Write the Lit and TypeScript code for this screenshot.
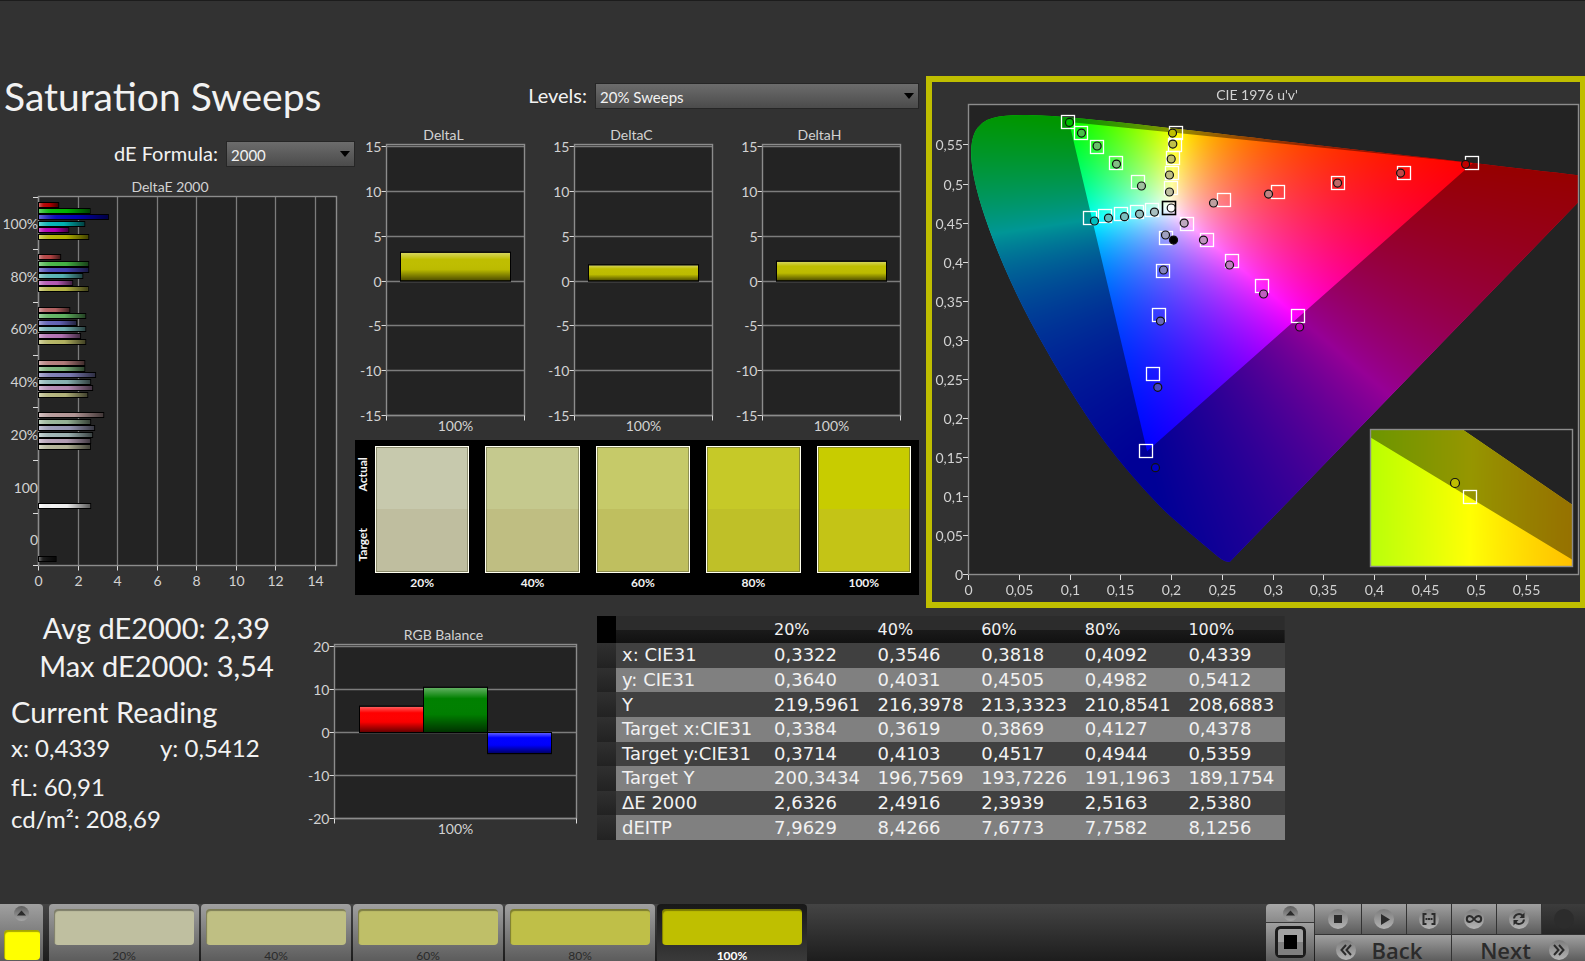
import { LitElement, html, svg, css } from "lit";
import { customElement, property } from "lit/decorators.js";
import { classMap } from "lit/directives/class-map.js";

type Point = [number, number];

const LEVELS = ["20%", "40%", "60%", "80%", "100%"];
/* Value of the unlit channels at each saturation level. */
const OFF = [160, 131, 104, 72, 0];
const OFF_SOFT = [168, 146, 122, 94, 0];
/* Red, green, blue, cyan, magenta, yellow as lit channels. */
const HUES = [
  [1, 0, 0],
  [0, 1, 0],
  [0, 0, 1],
  [0, 1, 1],
  [1, 0, 1],
  [1, 1, 0],
];

const tint = (hue: number, level: number) => {
  const off = hue === 3 || hue === 4 ? OFF_SOFT : OFF;
  return `rgb(${HUES[hue].map((on) => (on ? 191 : off[level])).join(",")})`;
};

const chartStyles = css`
  :host {
    display: block;
  }
  svg {
    display: block;
    width: 100%;
    height: auto;
  }
  text {
    font-family: Lato, "Open Sans", sans-serif;
    font-size: 14px;
    fill: #d2d2d2;
    dominant-baseline: central;
  }
  .mid {
    text-anchor: middle;
  }
  .end {
    text-anchor: end;
  }
  .plot {
    fill: #232323;
  }
  .frame {
    fill: none;
    stroke: #8c8c8c;
    stroke-width: 1.4;
  }
  .grid {
    stroke: #7c7c7c;
    stroke-width: 1.3;
  }
  .tick {
    stroke: #dcdcdc;
  }
  .bar {
    stroke: #000;
  }
`;

interface Bar {
  value: number;
  color: string;
}

/* Vertical bars round a zero line, with a scale at the left. */
@customElement("column-chart")
export class ColumnChart extends LitElement {
  @property() heading = "";
  @property({ type: Number }) limit = 15;
  @property({ type: Number }) step = 5;
  @property({ type: Number }) width = 188;
  @property({ type: Number }) height = 310;
  @property({ attribute: false }) bars: Bar[] = [];

  static styles = chartStyles;

  render() {
    const wide = this.width > 200;
    const left = wide ? 30.5 : 31.5;
    const right = this.width - (wide ? 15.5 : 18.5);
    const top = 19.5;
    const bottom = this.height - (wide ? 21.5 : 19.5);
    const unit = (bottom - top - 2) / (2 * this.limit);
    const y = (v: number) => bottom - (v + this.limit) * unit;
    const snap = (v: number) => Math.floor(y(v)) + 0.5;
    const values: number[] = [];
    for (let v = this.limit; v >= -this.limit; v -= this.step) values.push(v);
    const inset = wide ? 25 : 14;
    const slot = Math.floor((right - left - 2 * inset) / this.bars.length);
    return html`<svg viewBox="0 0 ${this.width} ${this.height}" role="img" aria-label=${this.heading}>
      <defs>
        <linearGradient id="gloss" x1="0" y1="0" x2="0" y2="1">
          <stop offset="0" stop-color="#fff" stop-opacity=".4" />
          <stop offset=".25" stop-color="#fff" stop-opacity="0" />
          <stop offset=".6" stop-color="#000" stop-opacity="0.02" />
          <stop offset="1" stop-color="#000" stop-opacity=".62" />
        </linearGradient>
      </defs>
      <text class="mid" x=${(left + right) / 2 - 12} y="9">${this.heading}</text>
      <rect class="plot" x=${left} y=${top} width=${right - left} height=${bottom - top} />
      ${values.map(
        (v) => svg`
          <line class="grid" x1=${left} x2=${right} y1=${snap(v)} y2=${snap(v)} />
          <line class="tick" x1=${left - 5} x2=${left} y1=${snap(v)} y2=${snap(v)} />
          <text class="end" x=${left - 5} y=${snap(v)}>${v}</text>`,
      )}
      <rect class="frame" x=${left} y=${top} width=${right - left} height=${bottom - top} />
      <line class="tick" x1=${left} x2=${left} y1=${bottom} y2=${bottom + 5} />
      <line class="tick" x1=${right} x2=${right} y1=${bottom} y2=${bottom + 5} />
      ${this.bars.map((bar, i) => {
        const from = Math.min(y(bar.value), y(0));
        const size = Math.abs(y(bar.value) - y(0));
        const x = left + inset + i * slot;
        return svg`
          <rect class="bar" x=${x} y=${from} width=${slot} height=${size} fill=${bar.color} />
          <rect x=${x} y=${from} width=${slot} height=${size} fill="url(#gloss)" />
          <rect class="bar" x=${x} y=${from} width=${slot} height=${size} fill="none" />`;
      })}
      <text class="mid" x=${(left + right) / 2} y=${bottom + 10}>100%</text>
    </svg>`;
  }
}

/* Horizontal bars of the error of each colour at each saturation level. */
@customElement("sweep-chart")
export class SweepChart extends LitElement {
  static styles = chartStyles;

  private groups = [
    { label: "100%", values: [1.02, 2.61, 3.54, 2.34, 1.53, 2.54] },
    { label: "80%", values: [1.12, 2.54, 2.54, 2.24, 1.73, 2.52] },
    { label: "60%", values: [1.58, 2.39, 1.93, 2.39, 2.13, 2.39] },
    { label: "40%", values: [2.34, 2.34, 2.89, 2.64, 2.74, 2.49] },
    { label: "20%", values: [3.3, 2.64, 2.84, 2.74, 2.64, 2.63] },
    { label: "100", values: [], gray: 2.64, fill: "#fff" },
    { label: "0", values: [], gray: 0.89, fill: "#141414" },
  ];

  private bar(slot: number, value: number, top: number, fill: string) {
    const y = Math.round(top + 5 + 6.4 * slot);
    const width = value * 19.75;
    return svg`
      <rect class="bar" x="38.5" y=${y + 0.5} width=${width} height="5" fill=${fill} />
      <rect x="39" y=${y + 1} width=${width - 1} height="4" fill="url(#sheen)" />`;
  }

  render() {
    const top = 19.5;
    const bottom = 388.5;
    const pitch = (bottom - top) / 7;
    return html`<svg viewBox="0 0 355 420" role="img" aria-label="DeltaE 2000">
      <defs>
        <linearGradient id="sheen">
          <stop offset="0" stop-color="#fff" stop-opacity=".4" />
          <stop offset=".25" stop-color="#777" stop-opacity=".1" />
          <stop offset=".55" stop-color="#000" stop-opacity="0.08" />
          <stop offset="1" stop-color="#000" stop-opacity=".65" />
        </linearGradient>
      </defs>
      <text class="mid" x="170" y="9">DeltaE 2000</text>
      <rect class="plot" x="38.5" y=${top} width="298" height=${bottom - top} />
      ${[0, 2, 4, 6, 8, 10, 12, 14].map((v) => {
        const x = Math.round(38 + v * 19.75) + 0.5;
        return svg`
          <line class="grid" x1=${x} x2=${x} y1=${top} y2=${bottom} />
          <line class="tick" x1=${x} x2=${x} y1=${bottom} y2=${bottom + 5} />
          <text class="mid" x=${x} y=${bottom + 15}>${v}</text>`;
      })}
      <rect class="frame" x="38.5" y=${top} width="298" height=${bottom - top} />
      ${this.groups.map((g, i) => {
        const start = top + i * pitch;
        const line = Math.round(start) + 0.5;
        return svg`
          <line class="tick" x1="33" x2="38" y1=${line} y2=${line} />
          <text class="end" x="38" y=${start + 27}>${g.label}</text>
          ${g.values.map((v, j) => this.bar(j, v, start, tint(j, 4 - i)))}
          ${g.gray ? this.bar(6, g.gray, start, g.fill!) : null}`;
      })}
      <line class="tick" x1="33" x2="38" y1=${bottom} y2=${bottom} />
    </svg>`;
  }
}

/* Spectral locus, CIE 1931 x and y. */
const LOCUS: Point[] = [
  [0.1741, 0.005], [0.1714, 0.0051], [0.1689, 0.0069], [0.1644, 0.0109],
  [0.1566, 0.0177], [0.144, 0.0297], [0.1241, 0.0578], [0.1096, 0.0868],
  [0.0913, 0.1327], [0.0687, 0.2007], [0.0454, 0.295], [0.0235, 0.4127],
  [0.0082, 0.5384], [0.0039, 0.6548], [0.0139, 0.7502], [0.0389, 0.812],
  [0.0743, 0.8338], [0.1142, 0.8262], [0.1547, 0.8059], [0.1929, 0.7816],
  [0.2296, 0.7543], [0.3016, 0.6923], [0.3731, 0.6245], [0.4441, 0.5547],
  [0.5125, 0.4866], [0.5752, 0.4242], [0.627, 0.3725], [0.6658, 0.334],
  [0.6915, 0.3083], [0.719, 0.2809], [0.7347, 0.2653],
];
const WHITE: Point = [0.3127, 0.329];
const CORNERS: Point[] = [
  [0.68, 0.32],
  [0.265, 0.69],
  [0.15, 0.06],
  [0.199, 0.3354],
  [0.3374, 0.1525],
  [0.4378, 0.5359],
];
/* Measured u' and v', 20% to 100%, in the order of HUES. */
const MEASURED: Point[][] = [
  [[0.2414, 0.4745], [0.2956, 0.4859], [0.3636, 0.4999], [0.4257, 0.5127], [0.4898, 0.5238]],
  [[0.1704, 0.4962], [0.1458, 0.5242], [0.1267, 0.5472], [0.1113, 0.5637], [0.0995, 0.5773]],
  [[0.1941, 0.4337], [0.1921, 0.389], [0.1891, 0.3239], [0.1865, 0.2394], [0.1842, 0.1369]],
  [[0.1832, 0.4629], [0.1685, 0.4604], [0.1537, 0.4571], [0.1379, 0.4553], [0.1241, 0.4515]],
  [[0.2125, 0.4489], [0.2315, 0.4272], [0.2572, 0.3954], [0.2907, 0.3584], [0.3262, 0.3163]],
  [[0.198, 0.4885], [0.198, 0.5102], [0.1997, 0.5306], [0.2013, 0.5497], [0.201, 0.5637]],
];

const toUv = ([x, y]: Point): Point => {
  const d = -2 * x + 12 * y + 3;
  return [(4 * x) / d, (9 * y) / d];
};

/* Linear display colour of the given chromaticity, with its peak channel full. */
const toRgb = (u: number, v: number) => {
  const X = (9 * u) / (4 * v);
  const Z = (12 - 3 * u - 20 * v) / (4 * v);
  const lin = [
    2.4934969 * X - 0.9313836 - 0.4027108 * Z,
    -0.829489 * X + 1.7626641 + 0.0236247 * Z,
    0.0358458 * X - 0.0761724 + 0.9568845 * Z,
  ].map((c) => Math.max(0, c));
  const peak = Math.max(...lin);
  return lin.map((c) => (255 * c) / peak);
};

interface View {
  x: number;
  y: number;
  w: number;
  h: number;
  u0: number;
  v0: number;
  su: number;
  sv: number;
  /* Share of the hue range that the view covers. */
  span: number;
}

const FULL: View = { x: 37, y: 23, w: 609, h: 470, u0: 0, v0: 0, su: 1015, sv: 784, span: 1 };
const DETAIL: View = {
  x: 439, y: 348, w: 201, h: 137,
  u0: 0.2047 - 100 / 2600, v0: 0.5638 - 69 / 12000, su: 2600, sv: 12000, span: 0.6,
};

const place = (view: View, [u, v]: Point): Point => [
  view.x + (u - view.u0) * view.su,
  view.y + view.h - (v - view.v0) * view.sv,
];

@customElement("gamut-chart")
export class GamutChart extends LitElement {
  static styles = [
    chartStyles,
    css`
      .stack {
        display: grid;
      }
      .stack > * {
        grid-area: 1 / 1;
        width: 100%;
        height: auto;
      }
      .target {
        fill: none;
        stroke: #fff;
        stroke-width: 1.3;
      }
      .target.white {
        stroke: #000;
        stroke-width: 1.6;
      }
      .reading {
        stroke: #111;
        stroke-width: 1.2;
      }
    `,
  ];

  firstUpdated() {
    const canvas = this.renderRoot.querySelector("canvas")!;
    const ctx = canvas.getContext("2d")!;
    this.paint(ctx, FULL);
    this.paint(ctx, DETAIL);
  }

  private paint(ctx: CanvasRenderingContext2D, view: View) {
    const layer = document.createElement("canvas");
    layer.width = view.w;
    layer.height = view.h;
    const layerCtx = layer.getContext("2d")!;
    const image = layerCtx.createImageData(view.w, view.h);
    const uMid = view.u0 + view.w / 2 / view.su;
    const vMid = view.v0 + view.h / 2 / view.sv;
    for (let j = 0; j < view.h; j++) {
      for (let i = 0; i < view.w; i++) {
        const u = view.u0 + (i + 0.5) / view.su;
        const v = view.v0 + (view.h - j - 0.5) / view.sv;
        const [r, g, b] = toRgb(uMid + (u - uMid) * view.span, vMid + (v - vMid) * view.span);
        image.data.set([r, g, b, 255], (j * view.w + i) * 4);
      }
    }
    layerCtx.putImageData(image, 0, 0);

    const edge = LOCUS.map((p) => place(view, toUv(p)));
    const locus = new Path2D();
    locus.moveTo(...edge[0]);
    for (let i = 1; i < edge.length - 1; i++) {
      const [x, y] = edge[i];
      const [nx, ny] = edge[i + 1];
      locus.quadraticCurveTo(x, y, (x + nx) / 2, (y + ny) / 2);
    }
    locus.lineTo(...edge[edge.length - 1]);
    locus.closePath();

    const shade = new Path2D(locus);
    CORNERS.slice(0, 3).forEach((p, i) => {
      const [x, y] = place(view, toUv(p));
      if (i) shade.lineTo(x, y);
      else shade.moveTo(x, y);
    });
    shade.closePath();

    ctx.save();
    ctx.beginPath();
    ctx.rect(view.x, view.y, view.w, view.h);
    ctx.clip();
    ctx.fillStyle = "#232323";
    ctx.fillRect(view.x, view.y, view.w, view.h);
    ctx.clip(locus);
    ctx.drawImage(layer, view.x, view.y);
    ctx.fillStyle = "rgba(0,0,0,.41)";
    ctx.fill(shade, "evenodd");
    ctx.restore();
  }

  private target(point: Point, cls = "target") {
    const [x, y] = place(FULL, point);
    return svg`<rect class=${cls} x=${Math.round(x) - 7.5} y=${Math.round(y) - 6.5} width="13" height="13" />`;
  }

  private reading(point: Point, fill: string) {
    const [x, y] = place(FULL, point);
    return svg`<circle class="reading" cx=${x - 0.5} cy=${y} r="4" fill=${fill} />`;
  }

  render() {
    const ticks = Array.from({ length: 12 }, (_, i) => i * 0.05);
    const label = (v: number) => String(Number(v.toFixed(2))).replace(".", ",");
    return html`<div class="stack">
      <canvas width="648" height="520"></canvas>
      <svg viewBox="0 0 648 520" role="img" aria-label="CIE 1976 u'v'">
        <text class="mid" x="325" y="12">CIE 1976 u'v'</text>
        <rect class="frame" x="36.5" y="22.5" width="610" height="470" />
        ${ticks.map((t) => {
          const x = Math.round(36 + t * 1015) + 0.5;
          const y = Math.round(492 - t * 781) + 0.5;
          return svg`
            <line class="tick" x1=${x} x2=${x} y1="493" y2="498" />
            <text class="mid" x=${x} y="507">${label(t)}</text>
            <line class="tick" x1="31" x2="36" y1=${y} y2=${y} />
            <text class="end" x="31" y=${y}>${label(t)}</text>`;
        })}
        ${CORNERS.map((corner) =>
          [1, 0.8, 0.593, 0.393, 0.205].map((s) =>
            this.target(
              toUv([
                WHITE[0] + s * (corner[0] - WHITE[0]),
                WHITE[1] + s * (corner[1] - WHITE[1]),
              ]),
            ),
          ),
        )}
        ${this.target(toUv(WHITE), "target white")}
        ${MEASURED.map((row, hue) => row.map((p, level) => this.reading(p, tint(hue, level))))}
        ${this.reading([0.1997, 0.4681], "#fff")} ${this.reading([0.202, 0.4272], "#000")}
        <rect class="frame" x="438.5" y="347.5" width="202" height="137" />
        <circle class="reading" cx="523" cy="401" r="4.5" fill="#bfbe00" />
        <rect class="target" x="531.5" y="408.5" width="13" height="13" />
      </svg>
    </div>`;
  }
}

@customElement("app-root")
export class AppRoot extends LitElement {
  static styles = css`
    :host {
      display: flex;
      flex-direction: column;
      min-height: 100vh;
      box-sizing: border-box;
      border-top: 1px solid #1c1c1c;
      background: #323232;
      color: #f2f2f2;
      font-family: Lato, "Open Sans", sans-serif;
      overflow: hidden;
    }
    main {
      flex: 1;
      padding-top: 75px;
    }
    .top {
      display: grid;
      grid-template-columns: 355fr 571fr 659fr;
    }
    h1,
    h2,
    p {
      margin: 0;
      font-weight: 400;
    }
    h1 {
      padding-left: 4px;
      font-size: 39px;
      line-height: 40px;
    }
    .field {
      display: flex;
      justify-content: flex-end;
      align-items: center;
      gap: 8px;
      font-size: 20px;
      line-height: 24px;
    }
    .field label {
      padding-bottom: 2px;
    }
    .formula {
      padding: 25px 0 10px;
    }
    .levels {
      padding: 7px 0 16px;
    }
    .drop {
      display: grid;
      align-items: center;
    }
    .drop > * {
      grid-area: 1 / 1;
    }
    .formula .drop {
      width: 129px;
    }
    .levels .drop {
      width: 324px;
    }
    .drop svg {
      justify-self: end;
      width: 10px;
      height: 6px;
      margin-right: 5px;
      pointer-events: none;
    }
    select {
      appearance: none;
      width: 100%;
      height: 26px;
      padding: 1px 4px 0;
      border: 1px solid #262626;
      border-radius: 0;
      background: linear-gradient(#6c6c6c, #4b4b4b);
      color: #f2f2f2;
      font: 15px Lato, "Open Sans", sans-serif;
    }
    .middle {
      padding-right: 7px;
    }
    .deltas {
      display: grid;
      grid-template-columns: repeat(3, 1fr);
    }
    .compare {
      display: grid;
      grid-template-columns: 20px 1fr;
      margin-top: 5px;
      padding: 6px 8px 4px 0;
      background: #000;
      font-size: 12px;
      font-weight: 700;
      line-height: 16px;
    }
    .sides {
      display: flex;
      flex-direction: column;
      gap: 14px;
      height: 127px;
    }
    .sides span {
      flex: 1;
      writing-mode: vertical-rl;
      transform: rotate(180deg);
      text-align: center;
    }
    .patches {
      display: grid;
      grid-template-columns: repeat(5, 1fr);
      gap: 16px;
      text-align: center;
    }
    .patch {
      box-sizing: border-box;
      height: 127px;
      margin-bottom: 2px;
      border: 1px solid #fffff0;
      box-shadow: inset 0 0 0 1px rgba(90, 90, 60, 0.5);
    }
    .gamut {
      border: 6px solid #bfbe00;
      border-right-width: 5px;
    }
    .bottom {
      display: grid;
      grid-template-columns: 304fr 288fr 993fr;
      align-items: start;
    }
    .readings {
      padding: 1px 0 0 11px;
      min-width: 0;
      font-size: 24px;
      line-height: 32px;
      white-space: nowrap;
    }
    .readings h2,
    .stat {
      font-size: 29px;
      line-height: 38px;
    }
    .stat {
      padding-right: 2px;
      text-align: center;
    }
    .readings h2 {
      padding: 8px 0 1px;
    }
    .pair {
      display: grid;
      grid-template-columns: 149px 1fr;
      padding-bottom: 7px;
    }
    .balance {
      padding-top: 17px;
    }
    .data {
      padding: 8px 0 0 5px;
    }
    table {
      width: 688px;
      height: 224px;
      border-collapse: collapse;
      table-layout: fixed;
      font: 18px "DejaVu Sans", sans-serif;
      white-space: nowrap;
    }
    .gutter {
      width: 19px;
    }
    .names {
      width: 151px;
    }
    th,
    td {
      padding: 0 0 0 6px;
      font-weight: 400;
      text-align: left;
      line-height: 22px;
    }
    td {
      padding-left: 7px;
    }
    thead th {
      padding-left: 7px;
      font-size: 16px;
    }
    thead tr {
      height: 27px;
      background: linear-gradient(#2c2c2c 50%, #1a1a1a 52%, #111);
    }
    thead .handle {
      background: #000;
    }
    tbody tr {
      background: #404040;
    }
    tbody tr:nth-child(even) {
      background: #808080;
    }
    tbody .handle {
      background: linear-gradient(#303030, #222);
    }
    footer {
      display: flex;
      height: 57px;
      background: linear-gradient(#444, #1d1d1d);
    }
    button {
      display: flex;
      align-items: center;
      justify-content: center;
      padding: 0;
      border: 0;
      background: none;
      color: #2b2b2b;
      font: 12px Lato, "Open Sans", sans-serif;
    }
    .metal {
      background: linear-gradient(#a0a0a0, #5c5c5c);
    }
    .current {
      display: flex;
      flex-direction: column;
      align-items: center;
      width: 43px;
      margin-right: 6px;
      border-radius: 0 4px 0 0;
    }
    .current button {
      width: 43px;
      height: 26px;
      padding-bottom: 8px;
    }
    .now {
      width: 36px;
      height: 30px;
      border-radius: 4px;
      background: #ff0;
      box-shadow: inset 1px 2px 1px rgba(0, 0, 0, 0.35);
    }
    .tabs {
      display: flex;
      gap: 2px;
      flex: 1;
    }
    .tab {
      flex-direction: column;
      justify-content: flex-start;
      width: 150px;
      padding-top: 5px;
      border-radius: 4px 4px 0 0;
      line-height: 14px;
      overflow: hidden;
    }
    .tab.on {
      background: linear-gradient(#181818, #3a3a3a);
      color: #fff;
      font-weight: 700;
    }
    .chip {
      flex: none;
      width: 140px;
      height: 36px;
      margin-bottom: 4px;
      border-radius: 4px;
      box-shadow: inset 1px 2px 1px rgba(0, 0, 0, 0.35);
    }
    .side {
      display: grid;
      grid-template-rows: 18px 38px;
      gap: 1px;
      width: 48px;
      margin-right: 1px;
    }
    .side .metal:first-child {
      border-radius: 4px 4px 0 0;
      background: linear-gradient(#a8a8a8, #8a8a8a);
    }
    .controls {
      display: grid;
      grid-template-columns: 46px 44px 44px 44px 44px 43px;
      grid-template-rows: 30px 26px;
      gap: 1px;
      width: 270px;
      background: #333;
    }
    .controls .idle {
      background: linear-gradient(#3c3c3c, #262626);
    }
    .nav {
      grid-column: span 3;
      gap: 16px;
      padding: 4px 8px 0 0;
      font: 600 22px/24px "Open Sans", sans-serif;
      overflow: hidden;
    }
    .nav.wide {
      gap: 18px;
      padding: 4px 0 0 12px;
    }
    svg {
      display: block;
    }
    .disc.dark {
      fill: #2c2c2c;
    }
    .ink {
      fill: #2b2b2b;
    }
    .stroke {
      fill: none;
      stroke: #2b2b2b;
      stroke-width: 2;
    }
  `;

  private rows: string[][] = [
    ["x: CIE31", "0,3322", "0,3546", "0,3818", "0,4092", "0,4339"],
    ["y: CIE31", "0,3640", "0,4031", "0,4505", "0,4982", "0,5412"],
    ["Y", "219,5961", "216,3978", "213,3323", "210,8541", "208,6883"],
    ["Target x:CIE31", "0,3384", "0,3619", "0,3869", "0,4127", "0,4378"],
    ["Target y:CIE31", "0,3714", "0,4103", "0,4517", "0,4944", "0,5359"],
    ["Target Y", "200,3434", "196,7569", "193,7226", "191,1963", "189,1754"],
    ["ΔE 2000", "2,6326", "2,4916", "2,3939", "2,5163", "2,5380"],
    ["dEITP", "7,9629", "8,4266", "7,6773", "7,7582", "8,1256"],
  ];

  private patches = [
    ["#c7c9ad", "#bfbe9f"],
    ["#c5c98e", "#bfbe82"],
    ["#c6ca69", "#bfbf5f"],
    ["#c6c928", "#bfc028"],
    ["#c8cc00", "#c4c416"],
  ];

  private arrow() {
    return html`<svg viewBox="0 0 10 6" aria-hidden="true"><path d="M0 0h10L5 6z" fill="#000" /></svg>`;
  }

  private disc(shape: unknown, dark = false) {
    return html`<svg width="20" height="20" viewBox="0 0 20 20" aria-hidden="true">
      <defs>
        <linearGradient id="dish" x1="0" y1="0" x2="0" y2="1">
          <stop offset="0" stop-color="#7c7c7c" />
          <stop offset="1" stop-color="#b4b4b4" />
        </linearGradient>
      </defs>
      ${dark
        ? svg`<circle class="disc dark" cx="10" cy="10" r="10" />`
        : svg`<circle cx="10" cy="10" r="10" fill="url(#dish)" />`}
      ${shape}
    </svg>`;
  }

  private upDisc() {
    return html`<svg width="15" height="15" viewBox="0 0 15 15" aria-hidden="true">
      <defs>
        <linearGradient id="up" x1="0" y1="0" x2="0" y2="1">
          <stop offset="0" stop-color="#5e5e5e" />
          <stop offset="1" stop-color="#a6a6a6" />
        </linearGradient>
      </defs>
      <circle cx="7.5" cy="7.5" r="7.5" fill="url(#up)" />
      <path class="ink" d="M7.5 4.5l4.5 5h-9z" />
    </svg>`;
  }

  render() {
    const yellow = "#bfbe00";
    return html`
      <main>
        <div class="top">
          <section>
            <h1>Saturation Sweeps</h1>
            <div class="field formula">
              <label for="formula">dE Formula:</label>
              <div class="drop">
                <select id="formula"><option>2000</option></select>
                ${this.arrow()}
              </div>
            </div>
            <sweep-chart></sweep-chart>
          </section>
          <section class="middle">
            <div class="field levels">
              <label for="levels">Levels:</label>
              <div class="drop">
                <select id="levels"><option>20% Sweeps</option></select>
                ${this.arrow()}
              </div>
            </div>
            <div class="deltas">
              <column-chart heading="DeltaL" .bars=${[{ value: 3.2, color: yellow }]}></column-chart>
              <column-chart heading="DeltaC" .bars=${[{ value: 1.8, color: yellow }]}></column-chart>
              <column-chart heading="DeltaH" .bars=${[{ value: 2.2, color: yellow }]}></column-chart>
            </div>
            <div class="compare">
              <div class="sides"><span>Actual</span><span>Target</span></div>
              <div class="patches">
                ${this.patches.map(
                  ([actual, target], i) => html`<div>
                    <div class="patch" style="background:linear-gradient(${actual} 50%,${target} 50%)"></div>
                    ${LEVELS[i]}
                  </div>`,
                )}
              </div>
            </div>
          </section>
          <section class="gamut"><gamut-chart></gamut-chart></section>
        </div>
        <div class="bottom">
          <section class="readings">
            <p class="stat">Avg dE2000: 2,39</p>
            <p class="stat">Max dE2000: 3,54</p>
            <h2>Current Reading</h2>
            <div class="pair"><span>x: 0,4339</span><span>y: 0,5412</span></div>
            <p>fL: 60,91</p>
            <p>cd/m²: 208,69</p>
          </section>
          <section class="balance">
            <column-chart
              heading="RGB Balance"
              .limit=${20}
              .step=${10}
              .width=${288}
              .height=${215}
              .bars=${[
                { value: 6.1, color: "#f00" },
                { value: 10.5, color: "#008000" },
                { value: -4.9, color: "#00f" },
              ]}
            ></column-chart>
          </section>
          <section class="data">
            <table>
              <colgroup>
                <col class="gutter" />
                <col class="names" />
                <col span="5" />
              </colgroup>
              <thead>
                <tr>
                  <td class="handle"></td>
                  <td></td>
                  ${LEVELS.map((l) => html`<th scope="col">${l}</th>`)}
                </tr>
              </thead>
              <tbody>
                ${this.rows.map(
                  ([name, ...cells]) => html`<tr>
                    <td class="handle"></td>
                    <th scope="row">${name}</th>
                    ${cells.map((c) => html`<td>${c}</td>`)}
                  </tr>`,
                )}
              </tbody>
            </table>
          </section>
        </div>
      </main>
      <footer>
        <div class="current metal">
          <button aria-label="Expand patch">${this.upDisc()}</button>
          <div class="now"></div>
        </div>
        <div class="tabs">
          ${LEVELS.map(
            (l, i) => html`<button class=${classMap({ tab: true, metal: i < 4, on: i === 4 })}>
              <span class="chip" style="background-color:${tint(5, i)}"></span>${l}
            </button>`,
          )}
        </div>
        <div class="side">
          <button class="metal" aria-label="Expand window">${this.upDisc()}</button>
          <button class="metal" aria-label="Window pattern">
            <svg width="31" height="32" viewBox="0 0 31 32" aria-hidden="true">
              <rect x="1.5" y="1.5" width="28" height="29" rx="4" fill="#a2a2a2" stroke="#1c1c1c" stroke-width="3" />
              <path d="M3 16h25v13H3z" fill="#808080" />
              <rect x="9" y="9" width="13" height="14" fill="#000" />
            </svg>
          </button>
        </div>
        <div class="controls">
          <button class="metal" aria-label="Stop">${this.disc(svg`<path class="ink" d="M6 6h8v8H6z" />`)}</button>
          <button class="metal" aria-label="Play">${this.disc(svg`<path class="ink" d="M7 5l9 5.500-9 5.500z" />`)}</button>
          <button class="metal" aria-label="Read series">
            ${this.disc(svg`
              <path class="stroke" d="M7.500 5h-3v10h3M12.500 5h3v10h-3" />
              <path class="ink" d="M6.500 9h2v2h-2zM9 9h2v2H9zM11.500 9h2v2h-2z" />`)}
          </button>
          <button class="metal" aria-label="Read continuously">
            ${this.disc(svg`<path class="stroke" d="M10 10C8 7.500 7 7 5.800 7a3 3 0 0 0 0 6C7 13 8 12.500 10 10s3-3 4.200-3a3 3 0 0 1 0 6C13 13 12 12.500 10 10z" />`)}
          </button>
          <button class="metal" aria-label="Refresh">
            ${this.disc(svg`
              <path class="stroke" d="M5 9.500a5 5 0 0 1 8.500-3M15 10.500a5 5 0 0 1-8.500 3" />
              <path class="ink" d="M15.500 3.500v5.500h-5zM4.500 16.500V11h5z" />`)}
          </button>
          <button class="idle" aria-label="Record" disabled>${this.disc(null, true)}</button>
          <button class="nav metal">
            ${this.disc(svg`<path class="stroke" d="M10 5l-4.500 5 4.500 5M15 5l-4.500 5 4.500 5" />`)} Back
          </button>
          <button class="nav wide metal">
            Next ${this.disc(svg`<path class="stroke" d="M5 5l4.500 5L5 15M10 5l4.500 5-4.500 5" />`)}
          </button>
        </div>
      </footer>
    `;
  }
}
